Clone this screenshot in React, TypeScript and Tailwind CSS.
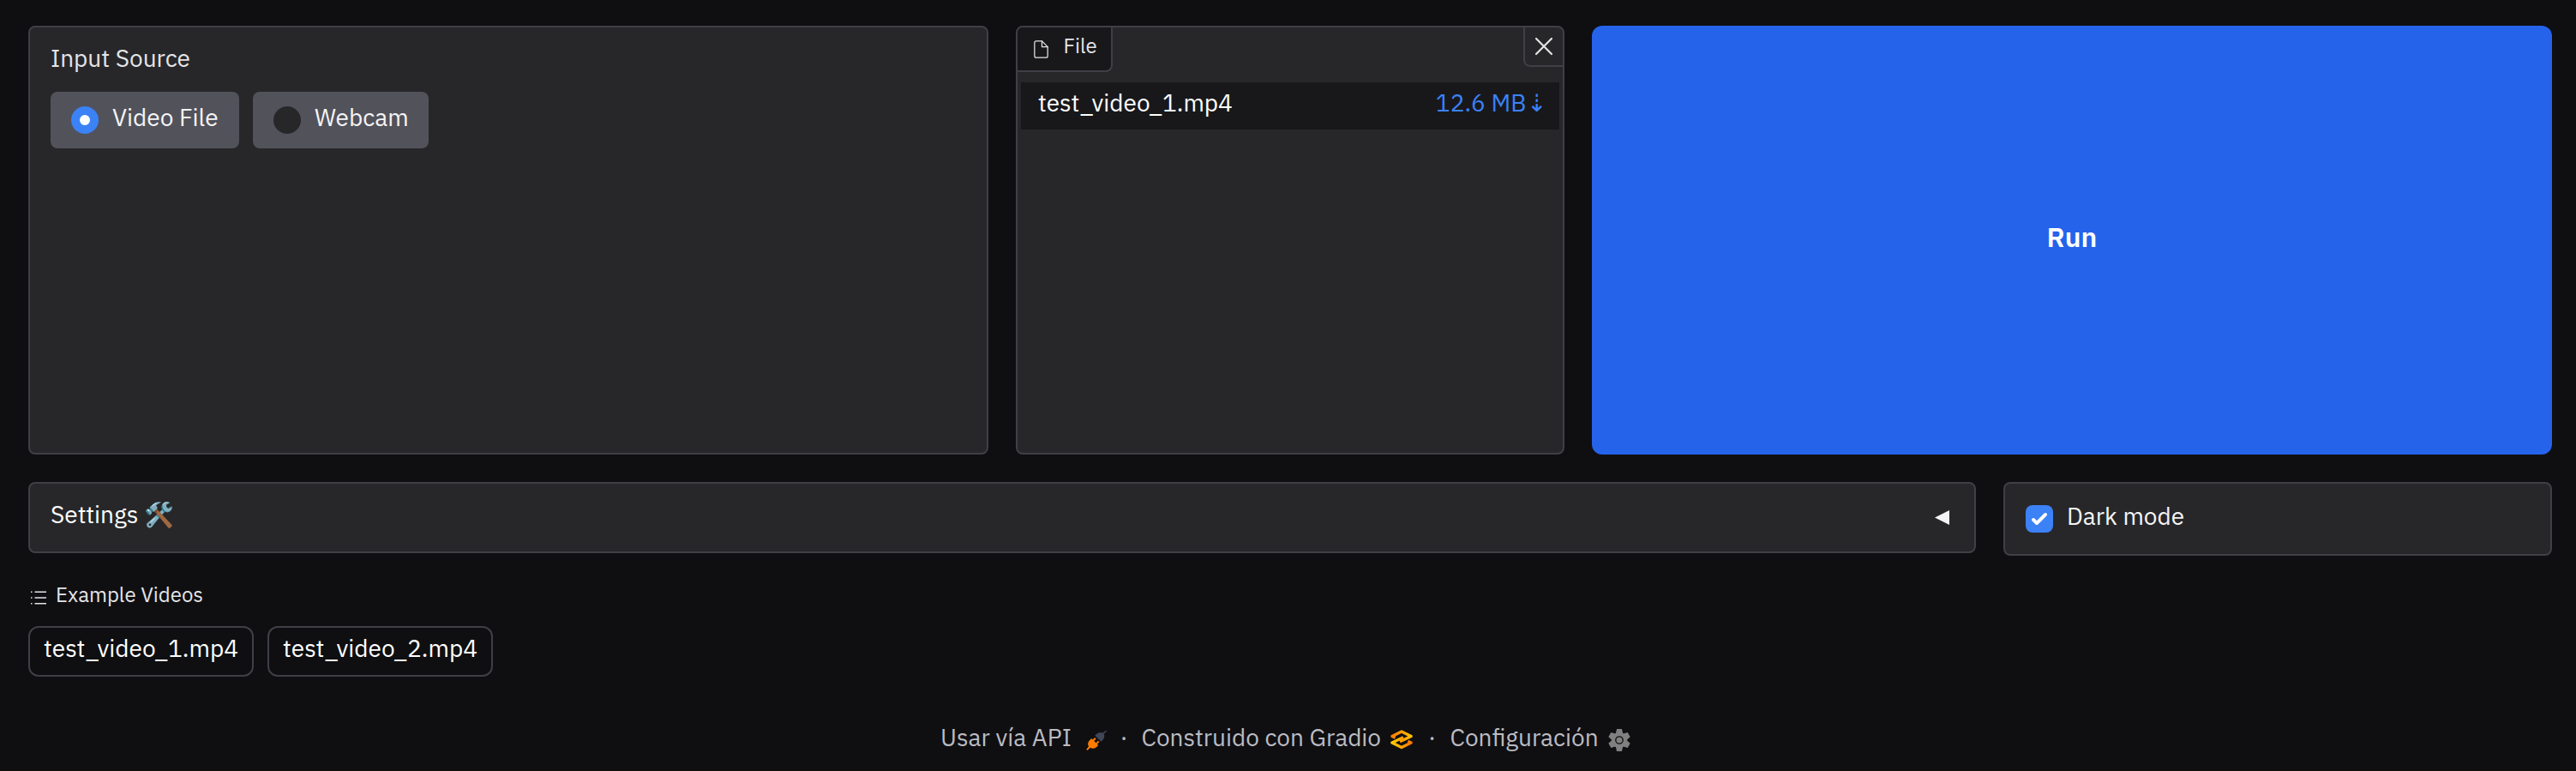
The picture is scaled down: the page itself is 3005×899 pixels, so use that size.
import React from "react";

const panel = "shrink-0 rounded-[8px] border-2 border-[#3f3f46] bg-[#27272a]";

function RadioOption({ label, checked, className }: { label: string; checked?: boolean; className: string }) {
  return (
    <label className={`flex h-[66px] shrink-0 items-start gap-4 rounded-[8px] bg-[#52525b] pl-6 ${className}`}>
      <span
        className={`mt-[17px] flex size-8 shrink-0 items-center justify-center rounded-full ${
          checked ? "bg-[#3b82f6]" : "bg-[#27272a]"
        }`}
      >
        {checked && <span className="size-3 rounded-full bg-white" />}
      </span>
      <span className="mt-[10px] whitespace-nowrap">{label}</span>
    </label>
  );
}

function FileIcon() {
  return (
    <svg className="mt-[13.5px] size-[23px] shrink-0" viewBox="0 0 24 24" fill="none" stroke="currentColor" strokeWidth="1.3" strokeLinecap="round" strokeLinejoin="round">
      <path d="M13 2H6a2 2 0 0 0-2 2v16a2 2 0 0 0 2 2h12a2 2 0 0 0 2-2V9z" />
      <polyline points="13 2 13 9 20 9" />
    </svg>
  );
}

function ListIcon() {
  return (
    <svg className="mt-[7.5px] size-6 shrink-0" viewBox="0 0 32 32" fill="currentColor">
      <path d="M10 6h18v2H10zm0 18h18v2H10zm0-9h18v2H10zm-6 0h2v2H4zm0-9h2v2H4zm0 18h2v2H4z" />
    </svg>
  );
}

function PlugIcon() {
  return (
    <svg className="mt-[11px] h-6 w-6 shrink-0" viewBox="0 0 24 24">
      <path d="M23.3 0.6 L24 1.4 L20.8 4.8 C21.9 7.6 21.2 10 19 12.2 L17.3 13.7 L10.3 6.6 L12 4.9 C14.3 2.8 17 2.3 19.7 3.6 Z" fill="#3e4657" />
      <path d="M0.8 23.4 L0.3 22.7 L3 19.6 C1.6 16.9 2 14.4 4.1 12.2 L6.2 10.1 L7.8 11.6 L10.2 9.1 L11.6 10.5 L9.3 13 L11.5 15.2 L14 12.7 L15.4 14.1 L12.9 16.7 L14.1 18 L12.2 20 C10 22 7.4 22.2 4.8 20.8 L1.8 23.7 Z" fill="#ff7c00" />
    </svg>
  );
}

function GradioIcon() {
  return (
    <svg className="mt-[11px] h-[23px] w-[26px] shrink-0" viewBox="0 0 26 23" fill="none" strokeWidth="3.3" strokeLinejoin="round">
      <defs>
        <linearGradient id="upper" gradientUnits="userSpaceOnUse" x1="0" y1="8" x2="26" y2="8">
          <stop offset="0" stopColor="#ff7a00" />
          <stop offset="0.6" stopColor="#ffa400" />
          <stop offset="1" stopColor="#ffc800" />
        </linearGradient>
        <linearGradient id="lower" gradientUnits="userSpaceOnUse" x1="0" y1="15" x2="26" y2="15">
          <stop offset="0" stopColor="#ffd400" />
          <stop offset="0.5" stopColor="#ffa400" />
          <stop offset="1" stopColor="#ff7000" />
        </linearGradient>
      </defs>
      <path d="M5.6 9.2 L1.9 7.4 L13 1.9 L24.1 7.4 L11 13.8" stroke="url(#upper)" />
      <path d="M20.4 13.3 L24.1 15.1 L13 20.6 L1.9 15.1 L15 8.7" stroke="url(#lower)" />
    </svg>
  );
}

function GearIcon() {
  return (
    <svg className="mt-[10px] size-[26px] shrink-0" viewBox="-13 -13 26 26" fill="#808080">
      <circle r="9.2" />
      {[0, 60, 120].map((a) => (
        <path key={a} d="M-3 -12.9 H3 L4.3 -7 V7 L3 12.9 H-3 L-4.3 7 V-7 Z" transform={`rotate(${a})`} />
      ))}
      <circle r="4.2" stroke="#0f0f11" strokeWidth="1.3" />
    </svg>
  );
}

export default function App() {
  return (
    <div className="flex h-[899px] w-[3005px] flex-col overflow-hidden bg-[#0f0f11] px-[33px] pt-[30px] font-['IBM_Plex_Sans','Roboto',sans-serif] text-[28px] leading-[39px] text-[#f4f4f5]">
      <div className="flex h-[500px] shrink-0 gap-8">
        <section className={`${panel} w-[1120px] pt-4 pl-6`}>
          <h2 className="text-[#e4e4e7]">Input Source</h2>
          <div className="mt-5 flex gap-4">
            <RadioOption label="Video File" checked className="w-[220px]" />
            <RadioOption label="Webcam" className="w-[205px]" />
          </div>
        </section>

        <section className={`${panel} w-[640px] overflow-hidden`}>
          <div className="flex items-start justify-between">
            <div className="flex h-[52px] w-[111px] items-start rounded-br-[8px] border-r-2 border-b-2 border-[#3f3f46] bg-[#18181b] pl-[15.5px] text-[24px] leading-[32px] text-[#e4e4e7]">
              <FileIcon />
              <span className="mt-[5px] ml-[15px]">File</span>
            </div>
            <button className="flex size-[46px] items-center justify-center rounded-bl-[8px] border-b-2 border-l-2 border-[#3f3f46] text-[#e4e4e7]" aria-label="Clear">
              <svg className="size-[22px]" viewBox="0 0 22 22" stroke="currentColor" strokeWidth="2.2" strokeLinecap="round">
                <path d="M2 2L20 20M20 2L2 20" />
              </svg>
            </button>
          </div>
          <div className="mx-1 mt-3 flex h-[55px] items-start justify-between bg-[#18181b] pt-1 pr-[15.5px] pl-5">
            <span className="text-white">test_video_1.mp4</span>
            <a className="flex whitespace-nowrap text-[#3b82f6]">
              <span>12.6 MB</span>
              <span>⇣</span>
            </a>
          </div>
        </section>

        <button className="flex w-[1120px] shrink-0 items-center justify-center rounded-[12px] bg-[#2563eb] pb-2 text-[32px] leading-[42px] font-semibold text-white">
          Run
        </button>
      </div>

      <div className="mt-8 flex shrink-0 items-start gap-8">
        <section className={`${panel} flex h-[83px] w-[2272px] items-start justify-between pt-4 pr-[29px] pl-6`}>
          <span className="text-white">Settings 🛠️</span>
          <svg className="mt-[15px] h-[17px] w-[17px]" viewBox="0 0 17 17" fill="currentColor">
            <path d="M0 8.5L17 0V17Z" />
          </svg>
        </section>
        <section className={`${panel} flex h-[86px] w-[640px] items-start gap-4 pl-6`}>
          <span className="mt-[25px] flex size-8 shrink-0 rounded-[8px] bg-[#3b82f6]">
            <svg className="size-8" viewBox="0 0 16 16" fill="white">
              <path d="M12.207 4.793a1 1 0 010 1.414l-5 5a1 1 0 01-1.414 0l-2-2a1 1 0 011.414-1.414L6.5 9.086l4.293-4.293a1 1 0 011.414 0z" />
            </svg>
          </span>
          <span className="mt-[18px]">Dark mode</span>
        </section>
      </div>

      <div className="mt-[29px] flex h-[32px] shrink-0 items-start gap-2 text-[24px] leading-[32px] text-[#e4e4e7]">
        <ListIcon />
        <span>Example Videos</span>
      </div>
      <div className="mt-[21px] flex shrink-0 gap-4">
        {["test_video_1.mp4", "test_video_2.mp4"].map((name) => (
          <button key={name} className="flex h-[59px] w-[263px] items-start justify-center rounded-[12px] border-2 border-[#3f3f46] pt-1 text-white">
            {name}
          </button>
        ))}
      </div>

      <footer className="mt-[51px] flex shrink-0 items-start pl-[1064px] whitespace-nowrap text-[#bbbbc2]">
        <span className="w-[169.5px] shrink-0">Usar vía API</span>
        <PlugIcon />
        <span className="w-[41px] shrink-0 text-center">·</span>
        <span className="w-[290px] shrink-0">Construido con Gradio</span>
        <GradioIcon />
        <span className="w-[44px] shrink-0 pl-[2px] text-center">·</span>
        <span className="w-[184px] shrink-0">Configuración</span>
        <GearIcon />
      </footer>
    </div>
  );
}
